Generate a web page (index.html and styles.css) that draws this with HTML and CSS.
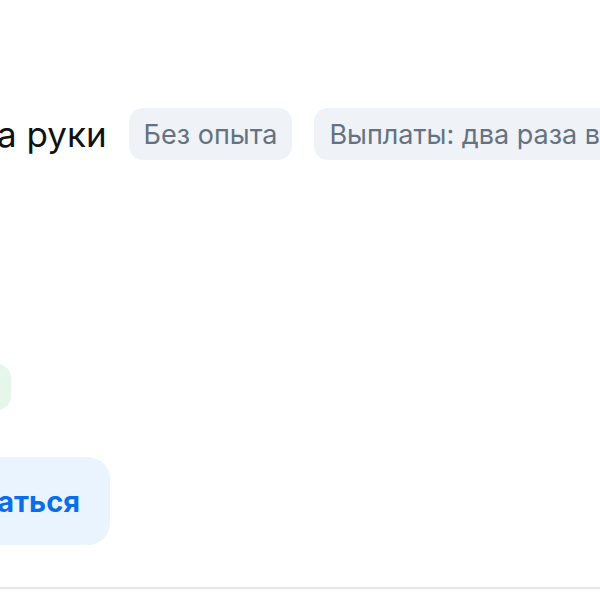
FILE: index.html
```html
<!DOCTYPE html>
<html lang="ru">
<head>
<meta charset="utf-8">
<link rel="stylesheet" href="styles.css">
</head>
<body>
<div class="card">
  <div class="meta-row">
    <span class="salary">а руки</span>
    <span class="chip">Без опыта</span>
    <span class="chip chip-wide">Выплаты: два раза в</span>
  </div>
  <div class="badge-row">
    <span class="badge-green"></span>
  </div>
  <div class="action-row">
    <span class="btn-respond">аться</span>
  </div>
  <div class="divider"></div>
</div>
</body>
</html>
```

FILE: styles.css
```css
html, body {
  margin: 0;
  padding: 0;
  background: #ffffff;
  overflow: hidden;
}
.card {
  width: 600px;
  height: 600px;
  font-family: Inter, "Liberation Sans", sans-serif;
  display: flex;
  flex-direction: column;
  overflow: hidden;
}
.meta-row {
  display: flex;
  align-items: center;
  gap: 22px;
  margin-top: 108px;
  height: 52px;
  white-space: nowrap;
}
.salary {
  font-size: 35px;
  color: #111111;
  margin-left: -3px;
}
.chip {
  display: flex;
  align-items: center;
  height: 52px;
  padding: 0 15px;
  border-radius: 14px;
  background: #eff2f7;
  color: #647281;
  font-size: 27px;
  flex-shrink: 0;
}
.chip-wide {
  padding-right: 40px;
}
.badge-row {
  margin-top: 204px;
  height: 46px;
  display: flex;
}
.badge-green {
  display: block;
  width: 40px;
  margin-left: -29px;
  height: 46px;
  border-radius: 14px;
  background: #e4f7ea;
}
.action-row {
  margin-top: 47px;
  display: flex;
}
.btn-respond {
  display: flex;
  align-items: center;
  justify-content: flex-end;
  width: 110px;
  height: 88px;
  padding-right: 30px;
  box-sizing: border-box;
  border-radius: 22px;
  border-top-left-radius: 0;
  border-bottom-left-radius: 0;
  background: #e9f4ff;
  color: #0b6de8;
  font-size: 29px;
  font-weight: 700;
  white-space: nowrap;
}
.divider {
  margin-top: 42px;
  height: 2px;
  background: #e4e8ee;
}
```
